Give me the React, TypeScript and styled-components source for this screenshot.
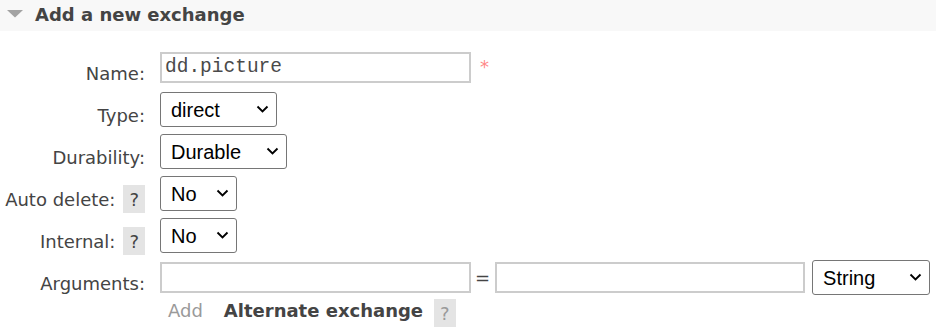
import React from 'react';
import styled, { createGlobalStyle } from 'styled-components';

const Global = createGlobalStyle`
  html, body { margin: 0; padding: 0; background: #fff; }
  body {
    font-family: "DejaVu Sans", Verdana, sans-serif;
    font-size: 18px;
    color: #444;
  }
`;

const Page = styled.div`
  width: 936px;
  height: 328px;
  overflow: hidden;
`;

const Header = styled.div`
  height: 31px;
  box-sizing: border-box;
  padding: 0 0 2px 7px;
  background: #f8f8f8;
  display: flex;
  align-items: center;
  gap: 12px;
`;

const Triangle = styled.svg`
  flex: none;
  margin-bottom: 1px;
`;

const Title = styled.h2`
  margin: 0;
  font-size: 18px;
  line-height: 21px;
  font-weight: bold;
  color: #444;
`;

const Form = styled.div`
  display: grid;
  grid-template-columns: 145px 1fr;
  column-gap: 15px;
  grid-auto-rows: 42px;
  padding-top: 15.5px;
`;

const Label = styled.div`
  text-align: right;
  padding-top: 16px;
  line-height: 21px;
  white-space: nowrap;
  color: #444;
`;

const Help = styled.span<{ $muted?: boolean }>`
  display: inline-block;
  padding: 4px 6px 3px;
  margin: -4px 0 -3px 8px;
  line-height: 21px;
  background: #e4e4e4;
  color: ${(p) => (p.$muted ? '#9a9a9a' : '#444')};
  font-weight: normal;
`;

const Field = styled.div`
  display: flex;
  align-items: center;
`;

const TextInput = styled.input<{ $w: number }>`
  box-sizing: border-box;
  flex: none;
  width: ${(p) => p.$w}px;
  height: 31px;
  margin: 0;
  padding: 0 3px 1px;
  border: 2px solid #ccc;
  border-radius: 0;
  background: #fff;
  outline: none;
  font-family: "Liberation Mono", "Courier New", monospace;
  font-size: 19.5px;
  color: #4a4a4a;
`;

const Mandatory = styled.span`
  align-self: flex-start;
  margin: 9px 0 0 9px;
  line-height: 21px;
  color: #f88;
`;

const SelectWrap = styled.div<{ $w: number }>`
  position: relative;
  flex: none;
  width: ${(p) => p.$w}px;
  height: 35px;
`;

const NativeSelect = styled.select`
  appearance: none;
  -webkit-appearance: none;
  box-sizing: border-box;
  width: 100%;
  height: 100%;
  margin: 0;
  padding: 0 0 0 10px;
  border: 1px solid #767676;
  border-radius: 3px;
  background: #fff;
  font-family: "Liberation Sans", Arial, sans-serif;
  font-size: 20px;
  color: #000;
  outline: none;
`;

const Chevron = styled.svg`
  position: absolute;
  right: 8px;
  top: 50%;
  transform: translateY(-62%);
  pointer-events: none;
`;

const Eq = styled.span`
  margin: 0 5px 0 4px;
  line-height: 21px;
  color: #444;
`;

const Spacer = styled.span`
  width: 7px;
  flex: none;
`;

const LinkRow = styled.div`
  grid-column: 2;
  display: flex;
  align-items: flex-start;
  padding-left: 8px;
`;

const AddLink = styled.span`
  line-height: 21px;
  padding-top: 1.5px;
  color: #9a9a9a;
  margin-right: 21px;
`;

const ArgLink = styled.span`
  line-height: 21px;
  padding-top: 1.5px;
  font-weight: bold;
  color: #444;
  margin-right: 3px;
`;

const LinkHelp = styled(Help)`
  margin: 0 0 0 8px;
`;

type SelectProps = { width: number; value: string; options: string[] };

function Select({ width, value, options }: SelectProps) {
  return (
    <SelectWrap $w={width}>
      <NativeSelect defaultValue={value}>
        {options.map((o) => (
          <option key={o} value={o}>
            {o}
          </option>
        ))}
      </NativeSelect>
      <Chevron width="13" height="8" viewBox="0 0 13 8">
        <polyline points="1.5,1.5 6.5,6.3 11.5,1.5" fill="none" stroke="#000" strokeWidth="1.9" />
      </Chevron>
    </SelectWrap>
  );
}

export default function App() {
  return (
    <Page>
      <Global />
      <Header>
        <Triangle width="16" height="8" viewBox="0 0 16 8">
          <polygon points="0,0 16,0 8,7.5" fill="#a3a3a3" />
        </Triangle>
        <Title>Add a new exchange</Title>
      </Header>
      <Form>
        <Label>Name:</Label>
        <Field>
          <TextInput $w={311} defaultValue="dd.picture" />
          <Mandatory>*</Mandatory>
        </Field>

        <Label>Type:</Label>
        <Field>
          <Select width={117} value="direct" options={['direct', 'fanout', 'headers', 'topic']} />
        </Field>

        <Label>Durability:</Label>
        <Field>
          <Select width={127} value="Durable" options={['Durable', 'Transient']} />
        </Field>

        <Label>
          Auto delete:<Help>?</Help>
        </Label>
        <Field>
          <Select width={77} value="No" options={['No', 'Yes']} />
        </Field>

        <Label>
          Internal:<Help>?</Help>
        </Label>
        <Field>
          <Select width={77} value="No" options={['No', 'Yes']} />
        </Field>

        <Label>Arguments:</Label>
        <Field>
          <TextInput $w={311} />
          <Eq>=</Eq>
          <TextInput $w={310} />
          <Spacer />
          <Select width={118} value="String" options={['String', 'Number', 'Boolean', 'List']} />
        </Field>

        <LinkRow>
          <AddLink>Add</AddLink>
          <ArgLink>Alternate exchange</ArgLink>
          <LinkHelp $muted>?</LinkHelp>
        </LinkRow>
      </Form>
    </Page>
  );
}
